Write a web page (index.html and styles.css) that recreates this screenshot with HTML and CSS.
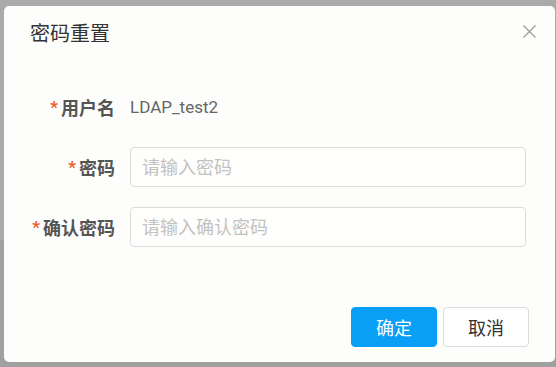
FILE: index.html
```html
<!DOCTYPE html>
<html lang="zh-CN">
<head>
    <meta charset="UTF-8">
    <meta name="viewport" content="width=device-width, initial-scale=1.0">
    <title>密码重置</title>
    <link rel="stylesheet" href="styles.css">
</head>
<body>
    <div class="backdrop">
        <div class="dialog">
            <div class="dialog-header">
                <span class="dialog-title">密码重置</span>
                <span class="dialog-close">
                    <svg width="13" height="13" viewBox="0 0 13 13">
                        <path d="M0.5 0.5 L12.5 12.5 M12.5 0.5 L0.5 12.5" stroke="#9a9a9a" stroke-width="1.2" fill="none"/>
                    </svg>
                </span>
            </div>
            <div class="form">
                <label class="form-label"><span class="req">*</span>用户名</label>
                <div class="form-value">LDAP_test2</div>

                <label class="form-label" for="pwd"><span class="req">*</span>密码</label>
                <input class="form-input" id="pwd" type="password" placeholder="请输入密码">

                <label class="form-label" for="pwd2"><span class="req">*</span>确认密码</label>
                <input class="form-input" id="pwd2" type="password" placeholder="请输入确认密码">
            </div>
            <div class="dialog-footer">
                <button class="btn btn-primary">确定</button>
                <button class="btn">取消</button>
            </div>
        </div>
    </div>
</body>
</html>
```

FILE: styles.css
```css
* {
    padding: 0;
    margin: 0;
    box-sizing: border-box;
    font-family: Roboto, "Noto Sans CJK SC", sans-serif;
}

body {
    width: 556px;
    height: 367px;
    overflow: hidden;
    background: linear-gradient(#aaaaaa 0, #aaaaaa 240px, #a0a0a0 240px);
}

.backdrop {
    padding: 6px 1px 0 4px;
}

.dialog {
    width: 551px;
    height: 356px;
    background: #fdfdfb;
    border-radius: 5px;
}

.dialog-header {
    display: flex;
    justify-content: space-between;
    align-items: flex-start;
    padding: 16px 19px 0 26px;
    height: 40px;
}

.dialog-title {
    font-size: 20px;
    line-height: 24px;
    color: #333;
}

.dialog-close {
    display: block;
    width: 13px;
    height: 13px;
    margin-top: 3px;
    cursor: pointer;
}

.dialog-close svg {
    display: block;
}

.form {
    display: grid;
    grid-template-columns: 126px 1fr;
    row-gap: 20px;
    margin-top: 41px;
    padding-right: 29px;
}

.form-label {
    display: flex;
    align-items: center;
    justify-content: flex-end;
    height: 40px;
    padding-right: 15px;
    font-size: 18px;
    font-weight: bold;
    color: #555;
}

.req {
    color: #ec5a2c;
    font-size: 17px;
    margin-right: 3px;
    font-weight: bold;
}

.form-value {
    display: flex;
    align-items: center;
    height: 40px;
    font-size: 17px;
    color: #666;
}

.form-input {
    height: 40px;
    border: 1px solid #dcdcdc;
    border-radius: 4px;
    padding: 0 11px;
    font-size: 18px;
    color: #333;
    background: #fefefc;
    outline: none;
}

.form-input::placeholder {
    color: #c2c2c2;
}

.dialog-footer {
    display: flex;
    justify-content: flex-end;
    gap: 6px;
    margin-top: 60px;
    padding-right: 26px;
}

.btn {
    width: 86px;
    height: 40px;
    border: 1px solid #dcdcdc;
    border-radius: 4px;
    background: #fff;
    font-size: 18px;
    color: #333;
    cursor: pointer;
}

.btn-primary {
    background: #0a9ff7;
    border-color: #0a9ff7;
    color: #fff;
}
```
